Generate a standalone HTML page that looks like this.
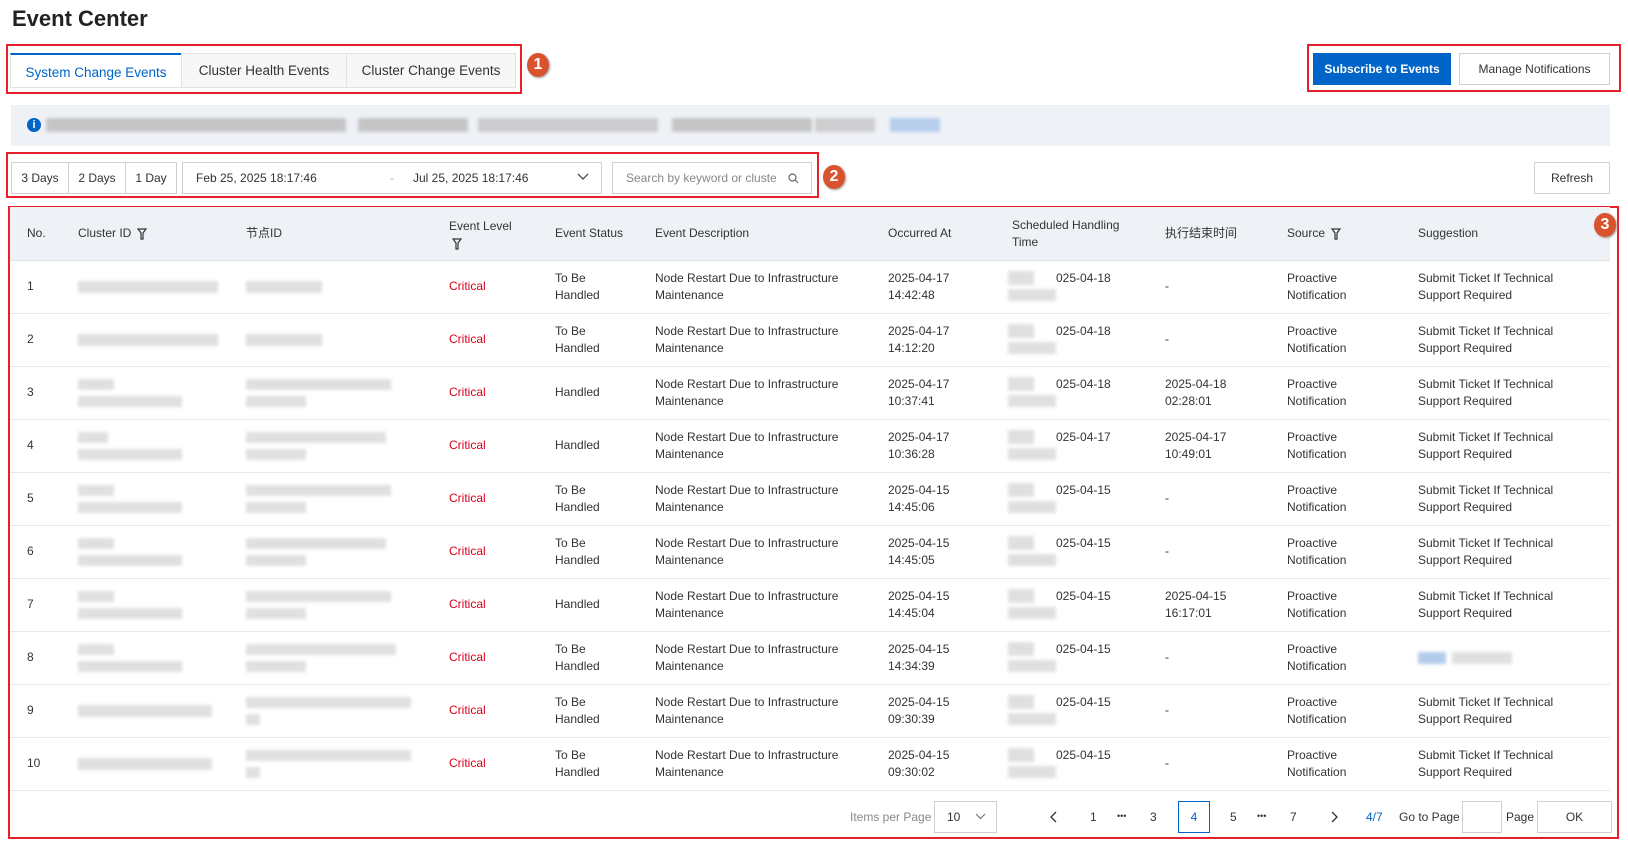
<!DOCTYPE html>
<html><head><meta charset="utf-8"><style>
*{box-sizing:border-box;margin:0;padding:0}
body{width:1628px;height:848px;background:#fff;font-family:"Liberation Sans","Noto Sans CJK SC",sans-serif;color:#333;font-size:12px;position:relative;overflow:hidden}
.a{position:absolute}
.red{position:absolute;border:2px solid #e8202a}
.badge{position:absolute;width:22px;height:24px;border-radius:50%;background:#d9542e;color:#fff;font-weight:bold;font-size:16px;text-align:center;line-height:24px;box-shadow:1px 1px 2px #999}
.tab{position:absolute;top:53px;height:35px;border:1px solid #e3e3e3;background:#f7f7f7;font-size:13.5px;line-height:33px;text-align:center;color:#333}
.btn{position:absolute;border:1px solid #cfcfcf;background:#fff;text-align:center;font-size:12px;color:#333}
.blur{position:absolute;background:#d8d8d8;filter:blur(1.5px);opacity:.8}
.row{position:absolute;left:10px;width:1600px;height:53px;border-bottom:1px solid #e8e8e8}
.c{position:absolute;top:0;height:52px;display:flex;align-items:center;line-height:17.5px}
.hd{position:absolute;display:flex;align-items:center;height:54px;top:0;line-height:17.5px;color:#333}
.crit{color:#d9001b}
.funnel{display:inline-block;width:10px;height:12px;vertical-align:middle;margin-left:6px}
.pg{position:absolute;top:810px}
</style></head><body>
<div class="a" style="left:12px;top:6px;font-size:22px;font-weight:bold;color:#222">Event Center</div>

<div class="red" style="left:6px;top:44px;width:516px;height:50px"></div>
<div class="tab" style="left:10px;width:172px;background:#fff;border-top:2px solid #0064c8;color:#0064c8;line-height:35px;top:53px">System Change Events</div>
<div class="tab" style="left:181px;width:166px">Cluster Health Events</div>
<div class="tab" style="left:346px;width:170px">Cluster Change Events</div>
<div class="badge" style="left:527px;top:53px">1</div>

<div class="red" style="left:1307px;top:44px;width:314px;height:48px"></div>
<div class="btn" style="left:1313px;top:53px;width:138px;height:32px;background:#0064c8;border-color:#0064c8;color:#fff;line-height:30px;font-weight:bold">Subscribe to Events</div>
<div class="btn" style="left:1459px;top:53px;width:151px;height:32px;line-height:30px">Manage Notifications</div>

<div class="a" style="left:11px;top:105px;width:1599px;height:41px;background:#eef1f6"></div>
<div class="a" style="left:27px;top:118px;width:14px;height:14px;border-radius:50%;background:#0064c8;color:#fff;font-size:11px;font-weight:bold;text-align:center;line-height:14px">i</div>
<div class="blur" style="left:46px;top:118px;width:300px;height:14px;background:#bbb"></div>
<div class="blur" style="left:358px;top:118px;width:110px;height:14px;background:#bbb"></div>
<div class="blur" style="left:478px;top:118px;width:180px;height:14px;background:#c3c3c3"></div>
<div class="blur" style="left:672px;top:118px;width:140px;height:14px;background:#bbb"></div>
<div class="blur" style="left:815px;top:118px;width:60px;height:14px;background:#c6c6c6"></div>
<div class="blur" style="left:890px;top:118px;width:50px;height:14px;background:#a9c6ea"></div>

<div class="red" style="left:6px;top:152px;width:813px;height:46px"></div>
<div class="btn" style="left:11px;top:162px;width:58px;height:32px;line-height:30px">3 Days</div>
<div class="btn" style="left:68px;top:162px;width:58px;height:32px;line-height:30px">2 Days</div>
<div class="btn" style="left:125px;top:162px;width:52px;height:32px;line-height:30px">1 Day</div>
<div class="btn" style="left:182px;top:162px;width:420px;height:32px;line-height:30px;text-align:left;padding-left:13px">Feb 25, 2025 18:17:46<span style="position:absolute;left:207px;color:#aaa">-</span><span style="position:absolute;left:230px">Jul 25, 2025 18:17:46</span><svg style="position:absolute;right:12px;top:10px" width="12" height="8" viewBox="0 0 12 8"><path d="M1 1l5 5 5-5" fill="none" stroke="#555" stroke-width="1.4"/></svg></div>
<div class="btn" style="left:612px;top:162px;width:200px;height:32px;line-height:30px;text-align:left;padding-left:13px;color:#888">Search by keyword or cluste<svg style="position:absolute;right:12px;top:10px" width="11" height="11" viewBox="0 0 11 11"><circle cx="4.5" cy="4.5" r="3.5" fill="none" stroke="#666" stroke-width="1.2"/><path d="M7 7l3 3" stroke="#666" stroke-width="1.2"/></svg></div>
<div class="badge" style="left:823px;top:165px">2</div>
<div class="btn" style="left:1534px;top:162px;width:76px;height:32px;line-height:30px">Refresh</div>

<div class="red" style="left:8px;top:206px;width:1611px;height:633px"></div>
<div class="a" style="left:10px;top:207px;width:1600px;height:54px;background:#eef1f6;border-bottom:1px solid #e0e0e0">
<div class="hd" style="left:17px">No.</div>
<div class="hd" style="left:68px">Cluster ID<svg class="funnel" viewBox="0 0 10 12"><path d="M1 1h8L6 5v6H4V5z" fill="none" stroke="#333" stroke-width="1.2"/></svg></div>
<div class="hd" style="left:236px">节点ID</div>
<div class="hd" style="left:439px;flex-direction:column;align-items:flex-start;justify-content:center">Event Level<svg class="funnel" style="margin:2px 0 0 3px" viewBox="0 0 10 12"><path d="M1 1h8L6 5v6H4V5z" fill="none" stroke="#333" stroke-width="1.2"/></svg></div>
<div class="hd" style="left:545px">Event Status</div>
<div class="hd" style="left:645px">Event Description</div>
<div class="hd" style="left:878px">Occurred At</div>
<div class="hd" style="left:1002px">Scheduled Handling<br>Time</div>
<div class="hd" style="left:1155px">执行结束时间</div>
<div class="hd" style="left:1277px">Source<svg class="funnel" viewBox="0 0 10 12"><path d="M1 1h8L6 5v6H4V5z" fill="none" stroke="#333" stroke-width="1.2"/></svg></div>
<div class="hd" style="left:1408px">Suggestion</div>
</div>
<div class="badge" style="left:1594px;top:213px">3</div>

<div class="row" style="top:261px"><div class="c" style="left:17px">1</div><div class="blur" style="left:68px;top:20px;width:140px;height:12px"></div><div class="blur" style="left:236px;top:20px;width:76px;height:12px"></div><div class="c crit" style="left:439px">Critical</div><div class="c" style="left:545px">To Be<br>Handled</div><div class="c" style="left:645px">Node Restart Due to Infrastructure<br>Maintenance</div><div class="c" style="left:878px">2025-04-17<br>14:42:48</div><div class="blur" style="left:998px;top:10px;width:26px;height:14px"></div><div class="blur" style="left:998px;top:28px;width:48px;height:12px"></div><div class="c" style="left:1046px;align-items:flex-start;padding-top:9px">025-04-18</div><div class="c" style="left:1155px">-</div><div class="c" style="left:1277px">Proactive<br>Notification</div><div class="c" style="left:1408px">Submit Ticket If Technical<br>Support Required</div></div>

<div class="row" style="top:314px"><div class="c" style="left:17px">2</div><div class="blur" style="left:68px;top:20px;width:140px;height:12px"></div><div class="blur" style="left:236px;top:20px;width:76px;height:12px"></div><div class="c crit" style="left:439px">Critical</div><div class="c" style="left:545px">To Be<br>Handled</div><div class="c" style="left:645px">Node Restart Due to Infrastructure<br>Maintenance</div><div class="c" style="left:878px">2025-04-17<br>14:12:20</div><div class="blur" style="left:998px;top:10px;width:26px;height:14px"></div><div class="blur" style="left:998px;top:28px;width:48px;height:12px"></div><div class="c" style="left:1046px;align-items:flex-start;padding-top:9px">025-04-18</div><div class="c" style="left:1155px">-</div><div class="c" style="left:1277px">Proactive<br>Notification</div><div class="c" style="left:1408px">Submit Ticket If Technical<br>Support Required</div></div>

<div class="row" style="top:367px"><div class="c" style="left:17px">3</div><div class="blur" style="left:68px;top:12px;width:36px;height:11px"></div><div class="blur" style="left:68px;top:29px;width:104px;height:11px"></div><div class="blur" style="left:236px;top:12px;width:145px;height:11px"></div><div class="blur" style="left:236px;top:29px;width:60px;height:11px"></div><div class="c crit" style="left:439px">Critical</div><div class="c" style="left:545px">Handled</div><div class="c" style="left:645px">Node Restart Due to Infrastructure<br>Maintenance</div><div class="c" style="left:878px">2025-04-17<br>10:37:41</div><div class="blur" style="left:998px;top:10px;width:26px;height:14px"></div><div class="blur" style="left:998px;top:28px;width:48px;height:12px"></div><div class="c" style="left:1046px;align-items:flex-start;padding-top:9px">025-04-18</div><div class="c" style="left:1155px">2025-04-18<br>02:28:01</div><div class="c" style="left:1277px">Proactive<br>Notification</div><div class="c" style="left:1408px">Submit Ticket If Technical<br>Support Required</div></div>

<div class="row" style="top:420px"><div class="c" style="left:17px">4</div><div class="blur" style="left:68px;top:12px;width:30px;height:11px"></div><div class="blur" style="left:68px;top:29px;width:104px;height:11px"></div><div class="blur" style="left:236px;top:12px;width:140px;height:11px"></div><div class="blur" style="left:236px;top:29px;width:60px;height:11px"></div><div class="c crit" style="left:439px">Critical</div><div class="c" style="left:545px">Handled</div><div class="c" style="left:645px">Node Restart Due to Infrastructure<br>Maintenance</div><div class="c" style="left:878px">2025-04-17<br>10:36:28</div><div class="blur" style="left:998px;top:10px;width:26px;height:14px"></div><div class="blur" style="left:998px;top:28px;width:48px;height:12px"></div><div class="c" style="left:1046px;align-items:flex-start;padding-top:9px">025-04-17</div><div class="c" style="left:1155px">2025-04-17<br>10:49:01</div><div class="c" style="left:1277px">Proactive<br>Notification</div><div class="c" style="left:1408px">Submit Ticket If Technical<br>Support Required</div></div>

<div class="row" style="top:473px"><div class="c" style="left:17px">5</div><div class="blur" style="left:68px;top:12px;width:36px;height:11px"></div><div class="blur" style="left:68px;top:29px;width:104px;height:11px"></div><div class="blur" style="left:236px;top:12px;width:145px;height:11px"></div><div class="blur" style="left:236px;top:29px;width:60px;height:11px"></div><div class="c crit" style="left:439px">Critical</div><div class="c" style="left:545px">To Be<br>Handled</div><div class="c" style="left:645px">Node Restart Due to Infrastructure<br>Maintenance</div><div class="c" style="left:878px">2025-04-15<br>14:45:06</div><div class="blur" style="left:998px;top:10px;width:26px;height:14px"></div><div class="blur" style="left:998px;top:28px;width:48px;height:12px"></div><div class="c" style="left:1046px;align-items:flex-start;padding-top:9px">025-04-15</div><div class="c" style="left:1155px">-</div><div class="c" style="left:1277px">Proactive<br>Notification</div><div class="c" style="left:1408px">Submit Ticket If Technical<br>Support Required</div></div>

<div class="row" style="top:526px"><div class="c" style="left:17px">6</div><div class="blur" style="left:68px;top:12px;width:36px;height:11px"></div><div class="blur" style="left:68px;top:29px;width:104px;height:11px"></div><div class="blur" style="left:236px;top:12px;width:140px;height:11px"></div><div class="blur" style="left:236px;top:29px;width:60px;height:11px"></div><div class="c crit" style="left:439px">Critical</div><div class="c" style="left:545px">To Be<br>Handled</div><div class="c" style="left:645px">Node Restart Due to Infrastructure<br>Maintenance</div><div class="c" style="left:878px">2025-04-15<br>14:45:05</div><div class="blur" style="left:998px;top:10px;width:26px;height:14px"></div><div class="blur" style="left:998px;top:28px;width:48px;height:12px"></div><div class="c" style="left:1046px;align-items:flex-start;padding-top:9px">025-04-15</div><div class="c" style="left:1155px">-</div><div class="c" style="left:1277px">Proactive<br>Notification</div><div class="c" style="left:1408px">Submit Ticket If Technical<br>Support Required</div></div>

<div class="row" style="top:579px"><div class="c" style="left:17px">7</div><div class="blur" style="left:68px;top:12px;width:36px;height:11px"></div><div class="blur" style="left:68px;top:29px;width:104px;height:11px"></div><div class="blur" style="left:236px;top:12px;width:145px;height:11px"></div><div class="blur" style="left:236px;top:29px;width:60px;height:11px"></div><div class="c crit" style="left:439px">Critical</div><div class="c" style="left:545px">Handled</div><div class="c" style="left:645px">Node Restart Due to Infrastructure<br>Maintenance</div><div class="c" style="left:878px">2025-04-15<br>14:45:04</div><div class="blur" style="left:998px;top:10px;width:26px;height:14px"></div><div class="blur" style="left:998px;top:28px;width:48px;height:12px"></div><div class="c" style="left:1046px;align-items:flex-start;padding-top:9px">025-04-15</div><div class="c" style="left:1155px">2025-04-15<br>16:17:01</div><div class="c" style="left:1277px">Proactive<br>Notification</div><div class="c" style="left:1408px">Submit Ticket If Technical<br>Support Required</div></div>

<div class="row" style="top:632px"><div class="c" style="left:17px">8</div><div class="blur" style="left:68px;top:12px;width:36px;height:11px"></div><div class="blur" style="left:68px;top:29px;width:104px;height:11px"></div><div class="blur" style="left:236px;top:12px;width:150px;height:11px"></div><div class="blur" style="left:236px;top:29px;width:60px;height:11px"></div><div class="c crit" style="left:439px">Critical</div><div class="c" style="left:545px">To Be<br>Handled</div><div class="c" style="left:645px">Node Restart Due to Infrastructure<br>Maintenance</div><div class="c" style="left:878px">2025-04-15<br>14:34:39</div><div class="blur" style="left:998px;top:10px;width:26px;height:14px"></div><div class="blur" style="left:998px;top:28px;width:48px;height:12px"></div><div class="c" style="left:1046px;align-items:flex-start;padding-top:9px">025-04-15</div><div class="c" style="left:1155px">-</div><div class="c" style="left:1277px">Proactive<br>Notification</div><div class="blur" style="left:1408px;top:20px;width:28px;height:12px;background:#9fbfe6"></div><div class="blur" style="left:1442px;top:20px;width:60px;height:12px"></div></div>

<div class="row" style="top:685px"><div class="c" style="left:17px">9</div><div class="blur" style="left:68px;top:20px;width:134px;height:12px"></div><div class="blur" style="left:236px;top:12px;width:165px;height:11px"></div><div class="blur" style="left:236px;top:29px;width:14px;height:11px"></div><div class="c crit" style="left:439px">Critical</div><div class="c" style="left:545px">To Be<br>Handled</div><div class="c" style="left:645px">Node Restart Due to Infrastructure<br>Maintenance</div><div class="c" style="left:878px">2025-04-15<br>09:30:39</div><div class="blur" style="left:998px;top:10px;width:26px;height:14px"></div><div class="blur" style="left:998px;top:28px;width:48px;height:12px"></div><div class="c" style="left:1046px;align-items:flex-start;padding-top:9px">025-04-15</div><div class="c" style="left:1155px">-</div><div class="c" style="left:1277px">Proactive<br>Notification</div><div class="c" style="left:1408px">Submit Ticket If Technical<br>Support Required</div></div>

<div class="row" style="top:738px"><div class="c" style="left:17px">10</div><div class="blur" style="left:68px;top:20px;width:134px;height:12px"></div><div class="blur" style="left:236px;top:12px;width:165px;height:11px"></div><div class="blur" style="left:236px;top:29px;width:14px;height:11px"></div><div class="c crit" style="left:439px">Critical</div><div class="c" style="left:545px">To Be<br>Handled</div><div class="c" style="left:645px">Node Restart Due to Infrastructure<br>Maintenance</div><div class="c" style="left:878px">2025-04-15<br>09:30:02</div><div class="blur" style="left:998px;top:10px;width:26px;height:14px"></div><div class="blur" style="left:998px;top:28px;width:48px;height:12px"></div><div class="c" style="left:1046px;align-items:flex-start;padding-top:9px">025-04-15</div><div class="c" style="left:1155px">-</div><div class="c" style="left:1277px">Proactive<br>Notification</div><div class="c" style="left:1408px">Submit Ticket If Technical<br>Support Required</div></div>

<div class="pg" style="left:850px;color:#888">Items per Page</div>
<div class="btn" style="left:934px;top:801px;width:63px;height:32px;line-height:30px;text-align:left;padding-left:12px">10<svg style="position:absolute;right:10px;top:11px" width="11" height="7" viewBox="0 0 11 7"><path d="M1 1l4.5 4.5L10 1" fill="none" stroke="#777" stroke-width="1.2"/></svg></div>
<svg class="a" style="left:1050px;top:811px" width="8" height="12" viewBox="0 0 8 12"><path d="M6 1L1 6l5 5" fill="none" stroke="#333" stroke-width="1.3"/></svg>
<div class="pg" style="left:1090px">1</div>
<div class="pg" style="left:1117px;top:811px;font-size:9px">•••</div>
<div class="pg" style="left:1150px">3</div>
<div class="btn" style="left:1178px;top:801px;width:32px;height:32px;line-height:30px;border-color:#0064c8;color:#0064c8">4</div>
<div class="pg" style="left:1230px">5</div>
<div class="pg" style="left:1257px;top:811px;font-size:9px">•••</div>
<div class="pg" style="left:1290px">7</div>
<svg class="a" style="left:1330px;top:811px" width="8" height="12" viewBox="0 0 8 12"><path d="M2 1l5 5-5 5" fill="none" stroke="#333" stroke-width="1.3"/></svg>
<div class="pg" style="left:1366px;color:#0064c8">4/7</div>
<div class="pg" style="left:1399px">Go to Page</div>
<div class="btn" style="left:1462px;top:801px;width:40px;height:32px"></div>
<div class="pg" style="left:1506px">Page</div>
<div class="btn" style="left:1537px;top:801px;width:75px;height:32px;line-height:30px">OK</div>
</body></html>
